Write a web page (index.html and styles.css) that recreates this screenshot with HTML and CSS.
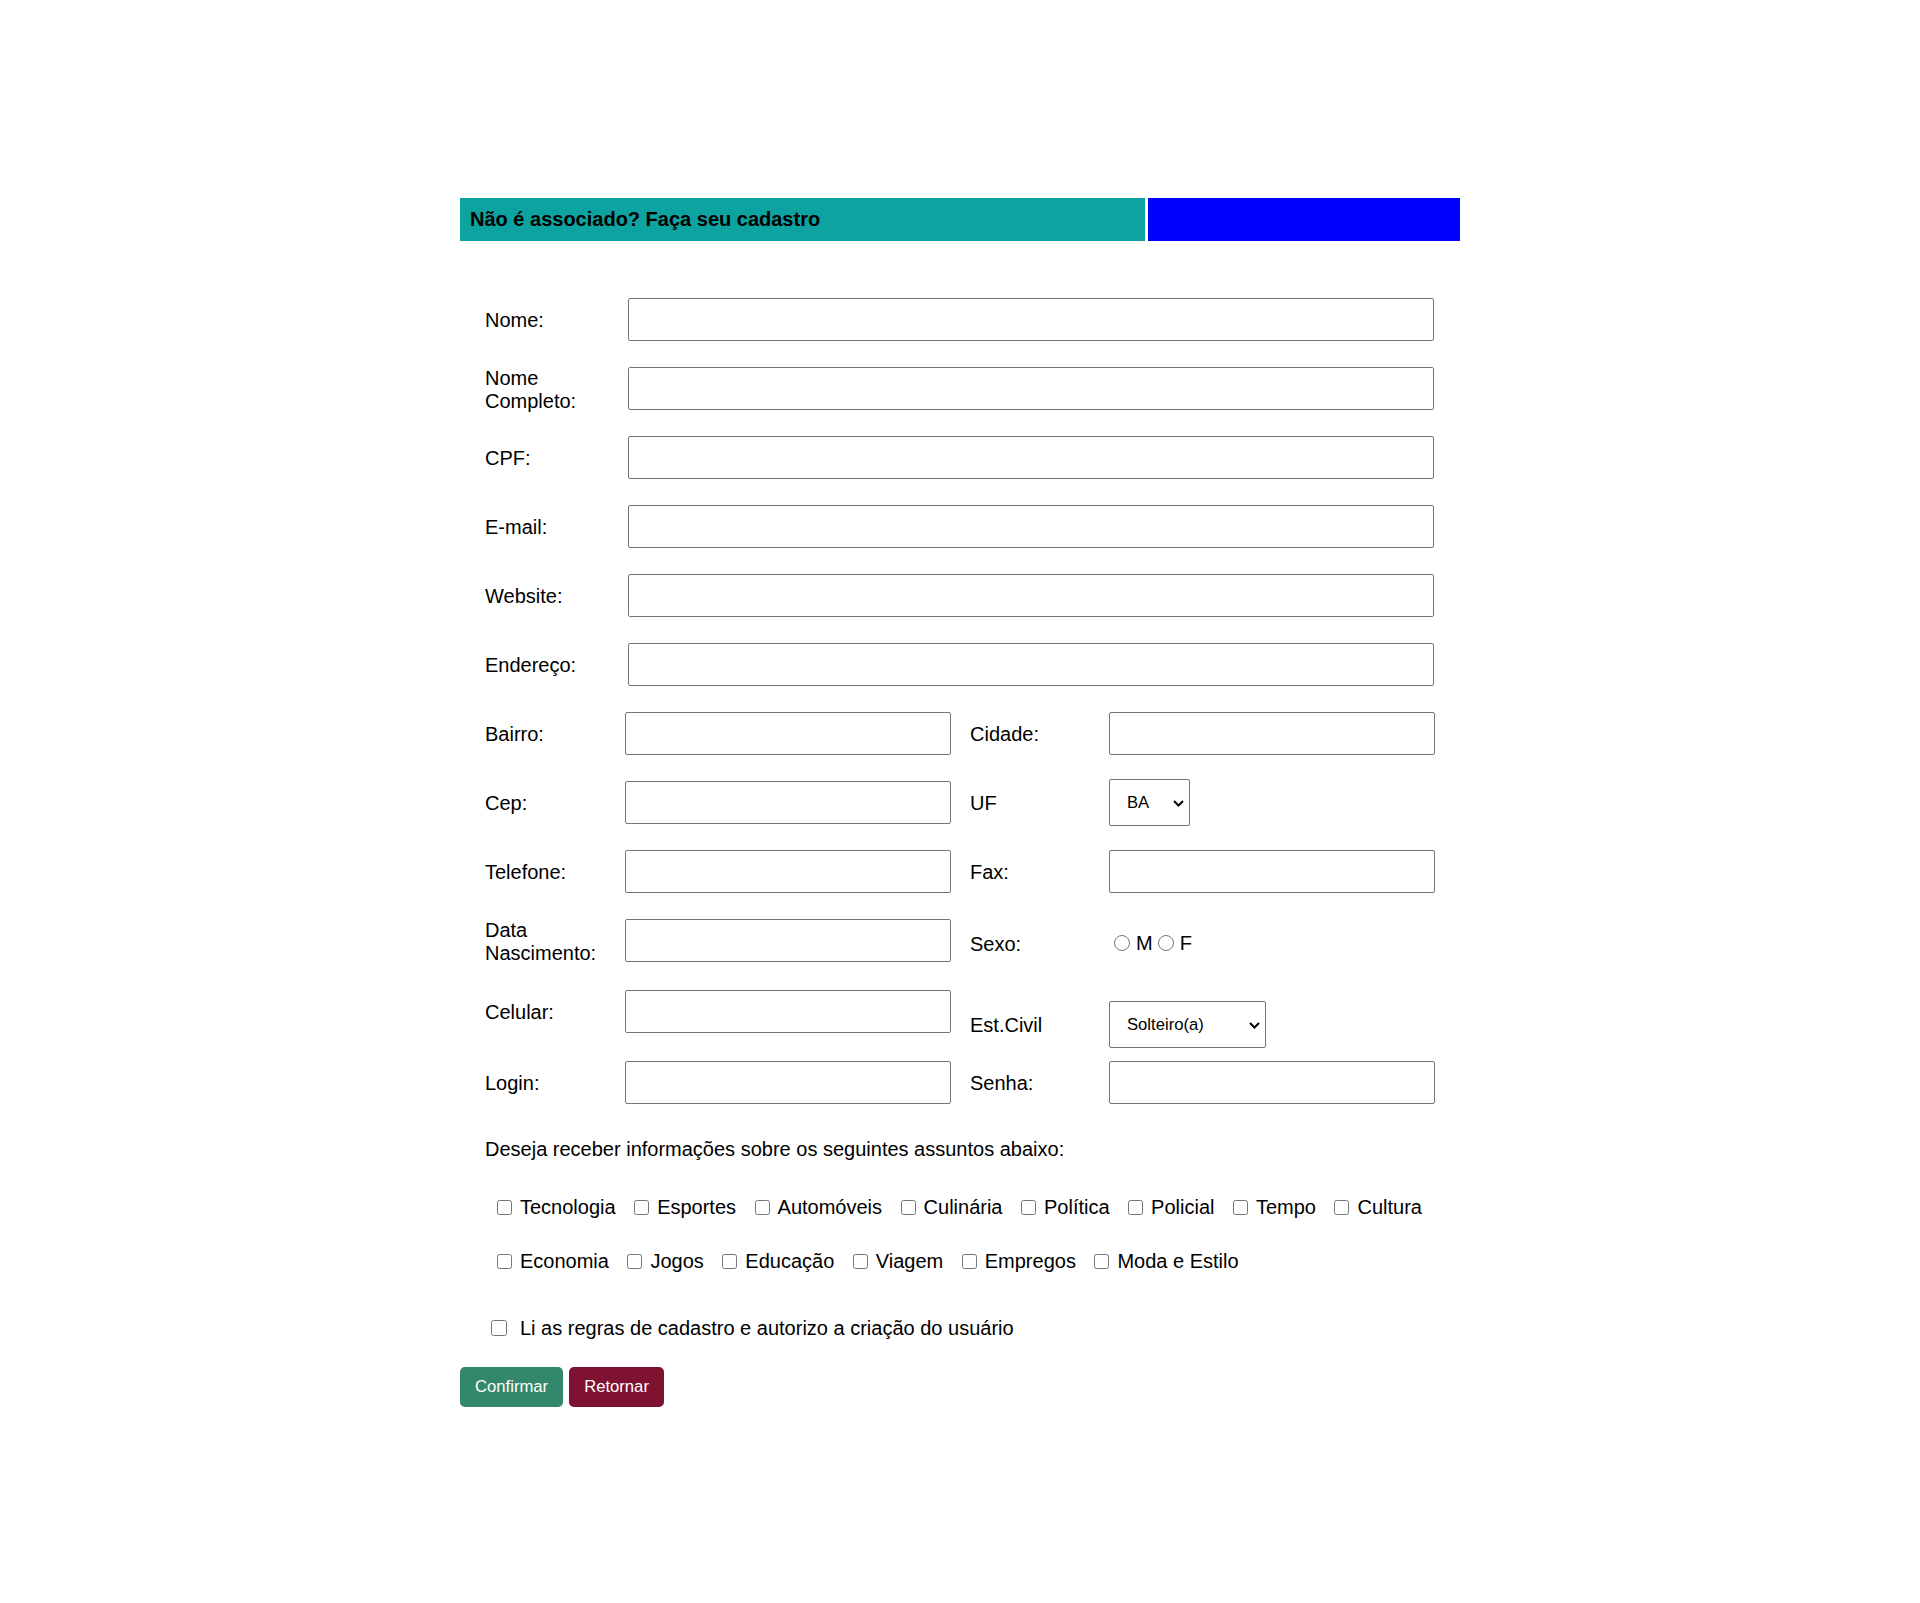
FILE: index.html
```html
<!DOCTYPE html>
<html lang="pt-BR">
<head>
<meta charset="utf-8">
<title>Cadastro</title>
<link rel="stylesheet" href="styles.css">
</head>
<body>
<div class="page">
  <div class="banner">
    <div class="banner-title">Não é associado? Faça seu cadastro</div>
    <div class="banner-side"></div>
  </div>

  <form class="form">
    <div class="full-rows">
      <div class="row"><label class="lbl lbl-full">Nome:</label><input class="txt txt-full" type="text"></div>
      <div class="row"><label class="lbl lbl-full">Nome Completo:</label><input class="txt txt-full" type="text"></div>
      <div class="row"><label class="lbl lbl-full">CPF:</label><input class="txt txt-full" type="text"></div>
      <div class="row"><label class="lbl lbl-full">E-mail:</label><input class="txt txt-full" type="text"></div>
      <div class="row"><label class="lbl lbl-full">Website:</label><input class="txt txt-full" type="text"></div>
      <div class="row"><label class="lbl lbl-full">Endereço:</label><input class="txt txt-full" type="text"></div>
    </div>

    <div class="half-rows">
      <div class="row">
        <div class="pair pair-left"><label class="lbl lbl-l">Bairro:</label><input class="txt txt-half" type="text"></div>
        <div class="pair pair-right"><label class="lbl lbl-r">Cidade:</label><input class="txt txt-half" type="text"></div>
      </div>
      <div class="row">
        <div class="pair pair-left"><label class="lbl lbl-l">Cep:</label><input class="txt txt-half" type="text"></div>
        <div class="pair pair-right"><label class="lbl lbl-r">UF</label>
          <div class="select-wrap">
            <select class="sel sel-uf"><option>BA</option></select>
            <svg class="chev" viewBox="0 0 11 7" width="11" height="7"><path d="M1 1 L5.5 5.5 L10 1" fill="none" stroke="#000" stroke-width="2"/></svg>
          </div>
        </div>
      </div>
      <div class="row">
        <div class="pair pair-left"><label class="lbl lbl-l">Telefone:</label><input class="txt txt-half" type="text"></div>
        <div class="pair pair-right"><label class="lbl lbl-r">Fax:</label><input class="txt txt-half" type="text"></div>
      </div>
      <div class="row">
        <div class="pair pair-left"><label class="lbl lbl-l">Data Nascimento:</label><input class="txt txt-half" type="text"></div>
        <div class="pair pair-right pair-sexo"><label class="lbl lbl-r">Sexo:</label>
          <div class="radios">
            <input class="radio" type="radio" name="sexo"><span>M</span><input class="radio radio-2" type="radio" name="sexo"><span>F</span>
          </div>
        </div>
      </div>
      <div class="row row-tall">
        <div class="pair pair-left pair-top"><label class="lbl lbl-l">Celular:</label><input class="txt txt-half" type="text"></div>
        <div class="pair pair-right pair-bottom"><label class="lbl lbl-r">Est.Civil</label>
          <div class="select-wrap">
            <select class="sel sel-civil"><option>Solteiro(a)</option></select>
            <svg class="chev" viewBox="0 0 11 7" width="11" height="7"><path d="M1 1 L5.5 5.5 L10 1" fill="none" stroke="#000" stroke-width="2"/></svg>
          </div>
        </div>
      </div>
      <div class="row">
        <div class="pair pair-left"><label class="lbl lbl-l">Login:</label><input class="txt txt-half" type="text"></div>
        <div class="pair pair-right"><label class="lbl lbl-r">Senha:</label><input class="txt txt-half" type="password"></div>
      </div>
    </div>

    <p class="intro">Deseja receber informações sobre os seguintes assuntos abaixo:</p>

    <div class="topics topics-1">
      <label class="topic"><input class="cb" type="checkbox">Tecnologia</label>
      <label class="topic"><input class="cb" type="checkbox">Esportes</label>
      <label class="topic"><input class="cb" type="checkbox">Automóveis</label>
      <label class="topic"><input class="cb" type="checkbox">Culinária</label>
      <label class="topic"><input class="cb" type="checkbox">Política</label>
      <label class="topic"><input class="cb" type="checkbox">Policial</label>
      <label class="topic"><input class="cb" type="checkbox">Tempo</label>
      <label class="topic"><input class="cb" type="checkbox">Cultura</label>
    </div>
    <div class="topics topics-2">
      <label class="topic"><input class="cb" type="checkbox">Economia</label>
      <label class="topic"><input class="cb" type="checkbox">Jogos</label>
      <label class="topic"><input class="cb" type="checkbox">Educação</label>
      <label class="topic"><input class="cb" type="checkbox">Viagem</label>
      <label class="topic"><input class="cb" type="checkbox">Empregos</label>
      <label class="topic"><input class="cb" type="checkbox">Moda e Estilo</label>
    </div>

    <label class="terms"><input class="cb cb-terms" type="checkbox">Li as regras de cadastro e autorizo a criação do usuário</label>

    <div class="actions">
      <button type="button" class="btn btn-confirm">Confirmar</button>
      <button type="button" class="btn btn-back">Retornar</button>
    </div>
  </form>
</div>
</body>
</html>
```

FILE: styles.css
```css
html, body {
  margin: 0;
  padding: 0;
  background: #fff;
}

body {
  font-family: "Liberation Sans", Arial, sans-serif;
  font-size: 20px;
  line-height: 23px;
  color: #000;
}

.page {
  width: 1000px;
  margin: 0 auto;
  padding-top: 198px;
}

.banner {
  display: flex;
  gap: 3px;
  height: 43px;
}

.banner-title {
  width: 685px;
  box-sizing: border-box;
  background: #0da3a0;
  font-weight: bold;
  line-height: 43px;
  padding-left: 10px;
}

.banner-side {
  flex: 1;
  background: #0000ff;
}

.form {
  padding: 0 25px;
  margin: 0;
}

.full-rows {
  margin-top: 44px;
}

.row {
  display: flex;
  align-items: center;
  height: 69px;
}

.lbl {
  display: block;
  padding-top: 2px;
}

.lbl-full { width: 143px; }
.lbl-l { width: 140px; }
.lbl-r { width: 139px; }

.txt {
  box-sizing: border-box;
  height: 43px;
  margin: 0;
  border: 1px solid #767676;
  border-radius: 2px;
  background: #fff;
  padding: 0 6px;
  font-family: "Liberation Sans", Arial, sans-serif;
  font-size: 16.67px;
}

.txt-full { width: 806px; }
.txt-half { width: 326px; }

.pair {
  display: flex;
  align-items: center;
}

.pair-right {
  margin-left: 19px;
}

.pair-sexo {
  margin-top: 5px;
}

.row-tall {
  height: 73px;
  align-items: flex-start;
}

.pair-top {
  margin-top: 15px;
}

.pair-bottom {
  align-self: flex-end;
}

.select-wrap {
  position: relative;
  display: inline-block;
}

.sel {
  -webkit-appearance: none;
  appearance: none;
  box-sizing: border-box;
  height: 47px;
  margin: 0;
  border: 1px solid #767676;
  border-radius: 2px;
  background: #fff;
  color: #000;
  padding: 0 0 0 17px;
  font-family: "Liberation Sans", Arial, sans-serif;
  font-size: 16.67px;
}

.sel-uf { width: 81px; }
.sel-civil { width: 157px; }

.chev {
  position: absolute;
  right: 6px;
  top: 50%;
  margin-top: -3px;
  pointer-events: none;
}

.radios {
  display: flex;
  align-items: center;
}

.radio {
  width: 16px;
  height: 16px;
  margin: 0 6px 0 5px;
}

.intro {
  margin: 21px 0 0;
  line-height: 23px;
}

.topics {
  display: flex;
  align-items: center;
  height: 30px;
  padding-left: 12px;
}

.topics-1 { margin-top: 31px; }
.topics-2 { margin-top: 24px; }

.topic {
  display: flex;
  align-items: center;
  margin-right: 18.5px;
}

.cb {
  width: 15px;
  height: 15px;
  margin: 0 8px 0 0;
}

.terms {
  display: flex;
  align-items: center;
  height: 30px;
  margin-top: 37px;
  padding-left: 6px;
}

.cb-terms {
  width: 16px;
  height: 16px;
  margin: 0 13px 0 0;
}

.actions {
  display: flex;
  gap: 6px;
  margin-top: 24px;
  margin-left: -25px;
}

.btn {
  height: 40px;
  padding: 0 15px;
  border: 0;
  border-radius: 5px;
  color: #fff;
  font-family: "Liberation Sans", Arial, sans-serif;
  font-size: 16.67px;
  cursor: pointer;
}

.btn-confirm { background: #33876b; }
.btn-back { background: #7f1131; }
```
